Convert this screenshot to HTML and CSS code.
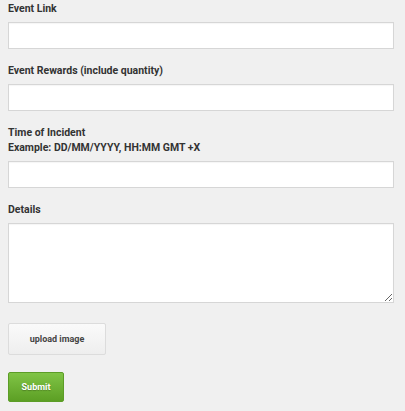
FILE: index.html
```html
<!DOCTYPE html>
<html lang="en">
<head>
    <meta charset="UTF-8">
    <meta name="viewport" content="width=device-width, initial-scale=1.0">
    <title>Report Form</title>
    <link rel="stylesheet" href="styles.css">
</head>
<body>
    <form class="report-form">
        <div class="field">
            <label for="eventLink">Event Link</label>
            <input type="text" id="eventLink">
        </div>
        <div class="field">
            <label for="eventRewards">Event Rewards (include quantity)</label>
            <input type="text" id="eventRewards">
        </div>
        <div class="field">
            <label for="incidentTime">Time of Incident<br>Example: DD/MM/YYYY, HH:MM GMT +X</label>
            <input type="text" id="incidentTime">
        </div>
        <div class="field">
            <label for="details">Details</label>
            <textarea id="details"></textarea>
        </div>
        <button type="button" class="upload-btn">upload image</button>
        <button type="submit" class="submit-btn">Submit</button>
    </form>
</body>
</html>
```

FILE: styles.css
```css
body {
    font-family: Roboto, 'Liberation Sans', Arial, sans-serif;
    background-color: #f0f0f0;
    margin: 0;
    padding: 0 11px 0 8px;
    color: #333;
}
.report-form {
    display: flex;
    flex-direction: column;
    align-items: flex-start;
    padding-top: 1px;
}
.field {
    width: 100%;
    margin-bottom: 14px;
}
.field label {
    display: block;
    font-size: 10.5px;
    font-weight: 700;
    line-height: 15px;
    margin-bottom: 6px;
}
.field input[type="text"],
.field textarea {
    display: block;
    box-sizing: border-box;
    width: 100%;
    margin: 0;
    background-color: #fff;
    border: 1px solid #d6d6d6;
    box-shadow: inset 0 1px 1px rgba(0, 0, 0, 0.04);
    font-family: inherit;
    font-size: 12px;
}
.field input[type="text"] {
    height: 27px;
}
.field textarea {
    height: 80px;
    resize: vertical;
}
.upload-btn {
    margin-top: 6px;
    width: 98px;
    height: 32px;
    border: 1px solid #dcdcdc;
    border-radius: 2px;
    background: linear-gradient(#fafafa, #eeeeee);
    color: #444;
    font-family: inherit;
    font-size: 9px;
    font-weight: 700;
}
.submit-btn {
    margin-top: 17px;
    width: 56px;
    height: 30px;
    border: 1px solid #5c9d27;
    border-radius: 2px;
    background: linear-gradient(#80c446, #5c9f24);
    color: #fff;
    font-family: inherit;
    font-size: 9px;
    font-weight: 700;
    text-shadow: 0 1px 1px rgba(0, 0, 0, 0.25);
}
```
